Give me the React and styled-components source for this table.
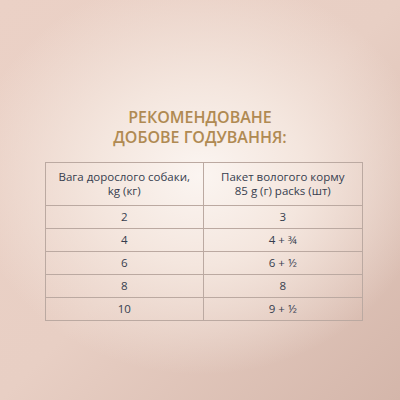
import React from 'react';
import styled, { createGlobalStyle } from 'styled-components';

const GlobalStyle = createGlobalStyle`
  html, body {
    margin: 0;
    padding: 0;
  }
  body {
    font-family: 'Open Sans', 'Liberation Sans', sans-serif;
  }
`;

const Page = styled.div`
  display: flex;
  flex-direction: column;
  align-items: center;

  width: 400px;
  height: 400px;
  box-sizing: border-box;
  padding-top: 107px;
  overflow: hidden;

  background:
    radial-gradient(ellipse 230px 200px at 200px 175px, #fbf5f1 0%, #f4e6de 45%, rgba(238, 217, 207, 0) 100%),
    linear-gradient(135deg, #ebd1c6 0%, #e8cfc4 50%, #d4b6aa 100%);
`;

const Title = styled.h1`
  margin: 0 0 15px 0;

  font-size: 16px;
  line-height: 20px;
  font-weight: 600;
  text-align: center;
  color: #b08a52;
`;

const Table = styled.table`
  width: 318px;
  margin-left: 7px;
  border-collapse: collapse;
  table-layout: fixed;

  font-size: 11.5px;
  color: #363d4e;
`;

const Cell = styled.td`
  height: ${(p) => (p.$head ? '42px' : '22px')};
  padding: 0 2px;
  border: 1px solid #bba9a1;

  text-align: center;
  vertical-align: middle;
  line-height: 14px;
`;

const rows = [
  ['2', '3'],
  ['4', '4 + ¾'],
  ['6', '6 + ½'],
  ['8', '8'],
  ['10', '9 + ½'],
];

const App = () => {
  return (
    <>
      <GlobalStyle />
      <Page>
        <Title>
          РЕКОМЕНДОВАНЕ
          <br />
          ДОБОВЕ ГОДУВАННЯ:
        </Title>
        <Table>
          <tbody>
            <tr>
              <Cell $head>
                Вага дорослого собаки,
                <br />
                kg (кг)
              </Cell>
              <Cell $head>
                Пакет вологого корму
                <br />
                85 g (г) packs (шт)
              </Cell>
            </tr>
            {rows.map(([weight, packs]) => (
              <tr key={weight}>
                <Cell>{weight}</Cell>
                <Cell>{packs}</Cell>
              </tr>
            ))}
          </tbody>
        </Table>
      </Page>
    </>
  );
};

export default App;
